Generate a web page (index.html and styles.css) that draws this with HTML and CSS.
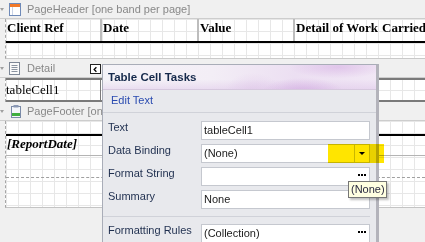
FILE: index.html
```html
<!DOCTYPE html>
<html lang="en">
<head>
    <meta charset="UTF-8">
    <title>Report Designer - Table Cell Tasks</title>
    <link rel="stylesheet" href="styles.css">
</head>
<body>
    <div class="designer">
        <div class="caption">
            <span class="marker"></span>
            <svg class="band-icon" width="14" height="14" viewBox="0 0 14 14">
                <rect x="1.5" y="1.5" width="11" height="12" fill="#fff" stroke="#6f8ab8"/>
                <rect x="2" y="2" width="10" height="3" fill="#f27a2a"/>
                <line x1="4.5" y1="5" x2="4.5" y2="13" stroke="#c9d3e6"/>
            </svg>
            <span class="caption-text">PageHeader [one band per page]</span>
        </div>
        <div class="band page-header">
            <div class="row header-row">
                <div class="cell c1">Client Ref</div>
                <div class="cell c2">Date</div>
                <div class="cell c3">Value</div>
                <div class="cell c4">Detail of Work</div>
                <div class="cell c5">Carried</div>
            </div>
        </div>

        <div class="caption">
            <span class="marker"></span>
            <svg class="band-icon" width="14" height="14" viewBox="0 0 14 14">
                <rect x="1.5" y="1.5" width="10" height="12" fill="#fafafa" stroke="#7d8796"/>
                <line x1="3.5" y1="4.5" x2="9.5" y2="4.5" stroke="#8a93a0"/>
                <line x1="3.5" y1="6.5" x2="9.5" y2="6.5" stroke="#8a93a0"/>
                <line x1="3.5" y1="8.5" x2="9.5" y2="8.5" stroke="#8a93a0"/>
                <line x1="3.5" y1="10.5" x2="9.5" y2="10.5" stroke="#8a93a0"/>
            </svg>
            <span class="caption-text">Detail</span>
            <span class="smart-tag">
                <svg width="10" height="9" viewBox="0 0 10 9">
                    <polyline points="6,2 3.5,4.5 6,7" fill="none" stroke="#000" stroke-width="1.4"/>
                </svg>
            </span>
        </div>
        <div class="band detail">
            <div class="row detail-row">
                <div class="cell d1">tableCell1</div>
            </div>
        </div>

        <div class="caption">
            <span class="marker"></span>
            <svg class="band-icon" width="14" height="14" viewBox="0 0 14 14">
                <rect x="3.5" y="2.5" width="9" height="11" fill="#f4f6fa" stroke="#7a8aa8"/>
                <rect x="5.5" y="1" width="5" height="2.5" fill="#8a98b4"/>
                <rect x="4" y="9" width="8" height="3" fill="#3fae3f"/>
            </svg>
            <span class="caption-text">PageFooter [one band per page]</span>
        </div>
        <div class="band page-footer">
            <div class="row footer-row">
                <div class="cell f1">[ReportDate]</div>
            </div>
            <div class="dash-line"></div>
        </div>
    </div>

    <div class="tasks">
        <div class="tasks-head">Table Cell Tasks</div>
        <div class="tasks-link"><span class="link">Edit Text</span></div>
        <div class="props">
            <div class="label">Text</div>
            <div class="box">tableCell1</div>

            <div class="label">Data Binding</div>
            <div class="box"><span class="val">(None)</span><span class="drop-btn"><span class="arrow"></span></span></div>

            <div class="label">Format String</div>
            <div class="box"><span class="val"></span><span class="dots"></span></div>

            <div class="label">Summary</div>
            <div class="box">None</div>

            <div class="sep"></div>

            <div class="label">Formatting Rules</div>
            <div class="box"><span class="val">(Collection)</span><span class="dots"></span></div>
        </div>
    </div>

    <div class="highlight"></div>
    <div class="tooltip">(None)</div>
</body>
</html>
```

FILE: styles.css
```css
* {
    box-sizing: border-box;
}
html, body {
    margin: 0;
}
body {
    position: relative;
    width: 425px;
    height: 242px;
    overflow: hidden;
    background: #f0f0f0;
    font-family: "Liberation Sans", Arial, sans-serif;
    font-size: 11px;
}

/* band captions */
.caption {
    position: relative;
    display: flex;
    align-items: center;
    height: 19px;
    border-bottom: 1px solid #cdcdcd;
    color: #888;
}
.marker {
    width: 0;
    height: 0;
    margin-right: 1px;
    border-left: 2px solid transparent;
    border-right: 2px solid transparent;
    border-top: 3px solid #a0a0a0;
}
.band-icon {
    display: block;
    margin-left: 3px;
    margin-right: 5px;
}
.caption-text {
    line-height: 18px;
    white-space: nowrap;
}
.smart-tag {
    position: absolute;
    left: 90px;
    top: 5px;
    width: 11px;
    height: 10px;
    background: #fff;
    border: 1px solid #222;
    display: flex;
    align-items: center;
    justify-content: center;
}
.smart-tag svg {
    display: block;
}

/* band bodies */
.band {
    margin-left: 5px;
    border-left: 1px dashed #a6a6a6;
    background-color: #fff;
    background-image:
        linear-gradient(90deg, #e7e7e7 1px, transparent 1px),
        linear-gradient(#e7e7e7 1px, transparent 1px);
    background-size: 12px 12px;
    font-family: "Liberation Serif", "Times New Roman", serif;
    font-size: 13px;
    color: #000;
}
.page-header {
    height: 40px;
    border-bottom: 1px solid #c9c9c9;
}
.detail {
    height: 24px;
}
.page-footer {
    height: 87px;
    padding-top: 13px;
    border-bottom: 1px solid #c4c4c4;
}

.row {
    display: flex;
}
.cell {
    white-space: nowrap;
    overflow: hidden;
}
.header-row {
    height: 24px;
    border-bottom: 2px solid #000;
    font-weight: bold;
    line-height: 15px;
}
.header-row .cell {
    padding: 1px 0 0 1px;
}
.c1 { width: 94px; }
.c2 { width: 97px; border-left: 2px solid #bdbdbd; }
.c3 { width: 96px; border-left: 2px solid #bdbdbd; }
.c4 { width: 88px; border-left: 2px solid #bdbdbd; }
.c5 { flex: 1; padding-left: 2px; }

.detail-row {
    height: 24px;
    border-top: 2px solid #7a7a7a;
    border-bottom: 2px solid #7a7a7a;
}
.d1 {
    width: 95px;
    border-right: 1px solid #7a7a7a;
    line-height: 19px;
}

.footer-row {
    height: 22px;
    border-top: 2px solid #000;
    border-bottom: 1px solid #b4b4b4;
}
.f1 {
    font-weight: bold;
    font-style: italic;
    line-height: 15px;
    padding-left: 1px;
}
.dash-line {
    margin-top: 21px;
    border-top: 1px dashed #a0a0a0;
}

/* smart tag panel */
.tasks {
    position: absolute;
    left: 102px;
    top: 64px;
    width: 277px;
    height: 200px;
    background: #e8e9ed;
    border: 1px solid #a9adb8;
    border-right: 3px solid #b3b3bb;
}
.tasks-head {
    height: 25px;
    padding-left: 5px;
    line-height: 25px;
    font-size: 11.5px;
    font-weight: bold;
    color: #15294b;
    border-bottom: 1px solid #d6c8de;
    background:
        radial-gradient(ellipse 60px 22px at 200px 28px, rgba(200, 150, 218, 0.5), transparent 70%),
        radial-gradient(ellipse 70px 16px at 235px 2px, rgba(212, 172, 226, 0.55), transparent 70%),
        radial-gradient(ellipse 40px 26px at 150px 26px, rgba(222, 196, 232, 0.5), transparent 70%),
        linear-gradient(180deg, rgba(255, 255, 255, 0) 60%, rgba(214, 184, 228, 0.35) 100%),
        linear-gradient(100deg, #f5f4f8 0%, #f3eef6 40%, #ecdff2 70%, #f1e7f5 100%);
}
.tasks-link {
    height: 23px;
    padding: 0 0 2px 8px;
    line-height: 20px;
    border-bottom: 1px solid #d0d2d9;
}
.link {
    color: #2a4bb0;
}
.props {
    display: grid;
    grid-template-columns: 93px 169px;
    row-gap: 4px;
    padding: 8px 0 0 5px;
}
.label {
    line-height: 13px;
    color: #1f2f4f;
    white-space: nowrap;
}
.box {
    display: flex;
    align-items: stretch;
    height: 19px;
    padding-left: 2px;
    line-height: 17px;
    background: #fff;
    border: 1px solid #c5c8cf;
    color: #1a1a1a;
}
.val {
    flex: 1;
}
.drop-btn {
    width: 15px;
    border-left: 1px solid #c9ccd3;
    display: flex;
    align-items: center;
    justify-content: center;
}
.arrow {
    width: 0;
    height: 0;
    border-left: 3px solid transparent;
    border-right: 3px solid transparent;
    border-top: 3px solid #000;
}
.dots {
    position: relative;
    width: 12px;
}
.dots::before {
    content: "";
    position: absolute;
    left: 1px;
    top: 6px;
    width: 2px;
    height: 2px;
    background: #000;
    box-shadow: 3px 0 #000, 6px 0 #000;
}
.sep {
    grid-column: 1 / -1;
    height: 1px;
    margin: 3px 0 3px -5px;
    background: #d0d2d9;
}

/* overlays */
.highlight {
    position: absolute;
    left: 328px;
    top: 144px;
    width: 56px;
    height: 19px;
    background: #ffe500;
    mix-blend-mode: multiply;
}
.tooltip {
    position: absolute;
    left: 348px;
    top: 181px;
    width: 39px;
    height: 17px;
    padding-left: 2px;
    line-height: 15px;
    background: #ffffe1;
    border: 1px solid #767676;
    box-shadow: 2px 2px 2px rgba(0, 0, 0, 0.25);
    color: #2a2a40;
}
```
